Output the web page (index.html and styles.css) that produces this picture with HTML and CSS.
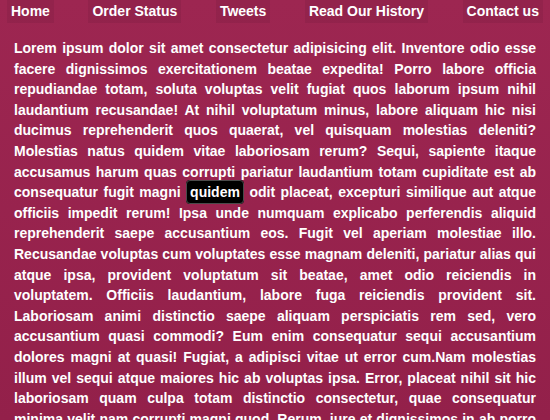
FILE: index.html
```html
<!DOCTYPE html>
<html>
<head>
<meta charset="utf-8">
<link rel="stylesheet" href="styles.css">
</head>
<body>
<nav class="nav">
  <a class="nav-item" href="#">Home</a>
  <a class="nav-item" href="#">Order Status</a>
  <a class="nav-item" href="#">Tweets</a>
  <a class="nav-item" href="#">Read Our History</a>
  <a class="nav-item" href="#">Contact us</a>
</nav>
<p class="content">Lorem ipsum dolor sit amet consectetur adipisicing elit. Inventore odio esse facere dignissimos exercitationem beatae expedita! Porro labore officia repudiandae totam, soluta voluptas velit fugiat quos laborum ipsum nihil laudantium recusandae! At nihil voluptatum minus, labore aliquam hic nisi ducimus reprehenderit quos quaerat, vel quisquam molestias deleniti? Molestias natus quidem vitae laboriosam rerum? Sequi, sapiente itaque accusamus harum quas corrupti pariatur laudantium totam cupiditate est ab consequatur fugit magni <span class="mark">quidem</span> odit placeat, excepturi similique aut atque officiis impedit rerum! Ipsa unde numquam explicabo perferendis aliquid reprehenderit saepe accusantium eos. Fugit vel aperiam molestiae illo. Recusandae voluptas cum voluptates esse magnam deleniti, pariatur alias qui atque ipsa, provident voluptatum sit beatae, amet odio reiciendis in voluptatem. Officiis laudantium, labore fuga reiciendis provident sit. Laboriosam animi distinctio saepe aliquam perspiciatis rem sed, vero accusantium quasi commodi? Eum enim consequatur sequi accusantium dolores magni at quasi! Fugiat, a adipisci vitae ut error cum.Nam molestias illum vel sequi atque maiores hic ab voluptas ipsa. Error, placeat nihil sit hic laboriosam quam culpa totam distinctio consectetur, quae consequatur minima velit nam corrupti magni quod. Rerum, iure et dignissimos in ab porro sint quibusdam nesciunt, voluptatibus eligendi accusamus dolorem.</p>
</body>
</html>
```
FILE: styles.css
```css
html, body {
  margin: 0;
  padding: 0;
}
body {
  background: linear-gradient(to bottom, #9d2651 0%, #93204a 100%);
  height: 420px;
  font-family: "Liberation Sans", Arial, sans-serif;
  color: #ffffff;
  overflow: hidden;
}
.nav {
  display: flex;
  justify-content: space-between;
  padding: 0 7px;
}
.nav-item {
  display: block;
  color: #ffffff;
  text-decoration: none;
  font-weight: bold;
  font-size: 14px;
  line-height: 23px;
  padding: 0 4px;
  background: rgba(0, 0, 0, 0.06);
}
.content {
  margin: 15px 0 0;
  padding: 0 14px;
  font-size: 14px;
  font-weight: bold;
  line-height: 20.6px;
  text-align: justify;
}
.mark {
  background: #000000;
  color: #ffffff;
  border-radius: 4px;
  padding: 3px 3px;
  border: 1px solid #4a4a4a;
}
```
